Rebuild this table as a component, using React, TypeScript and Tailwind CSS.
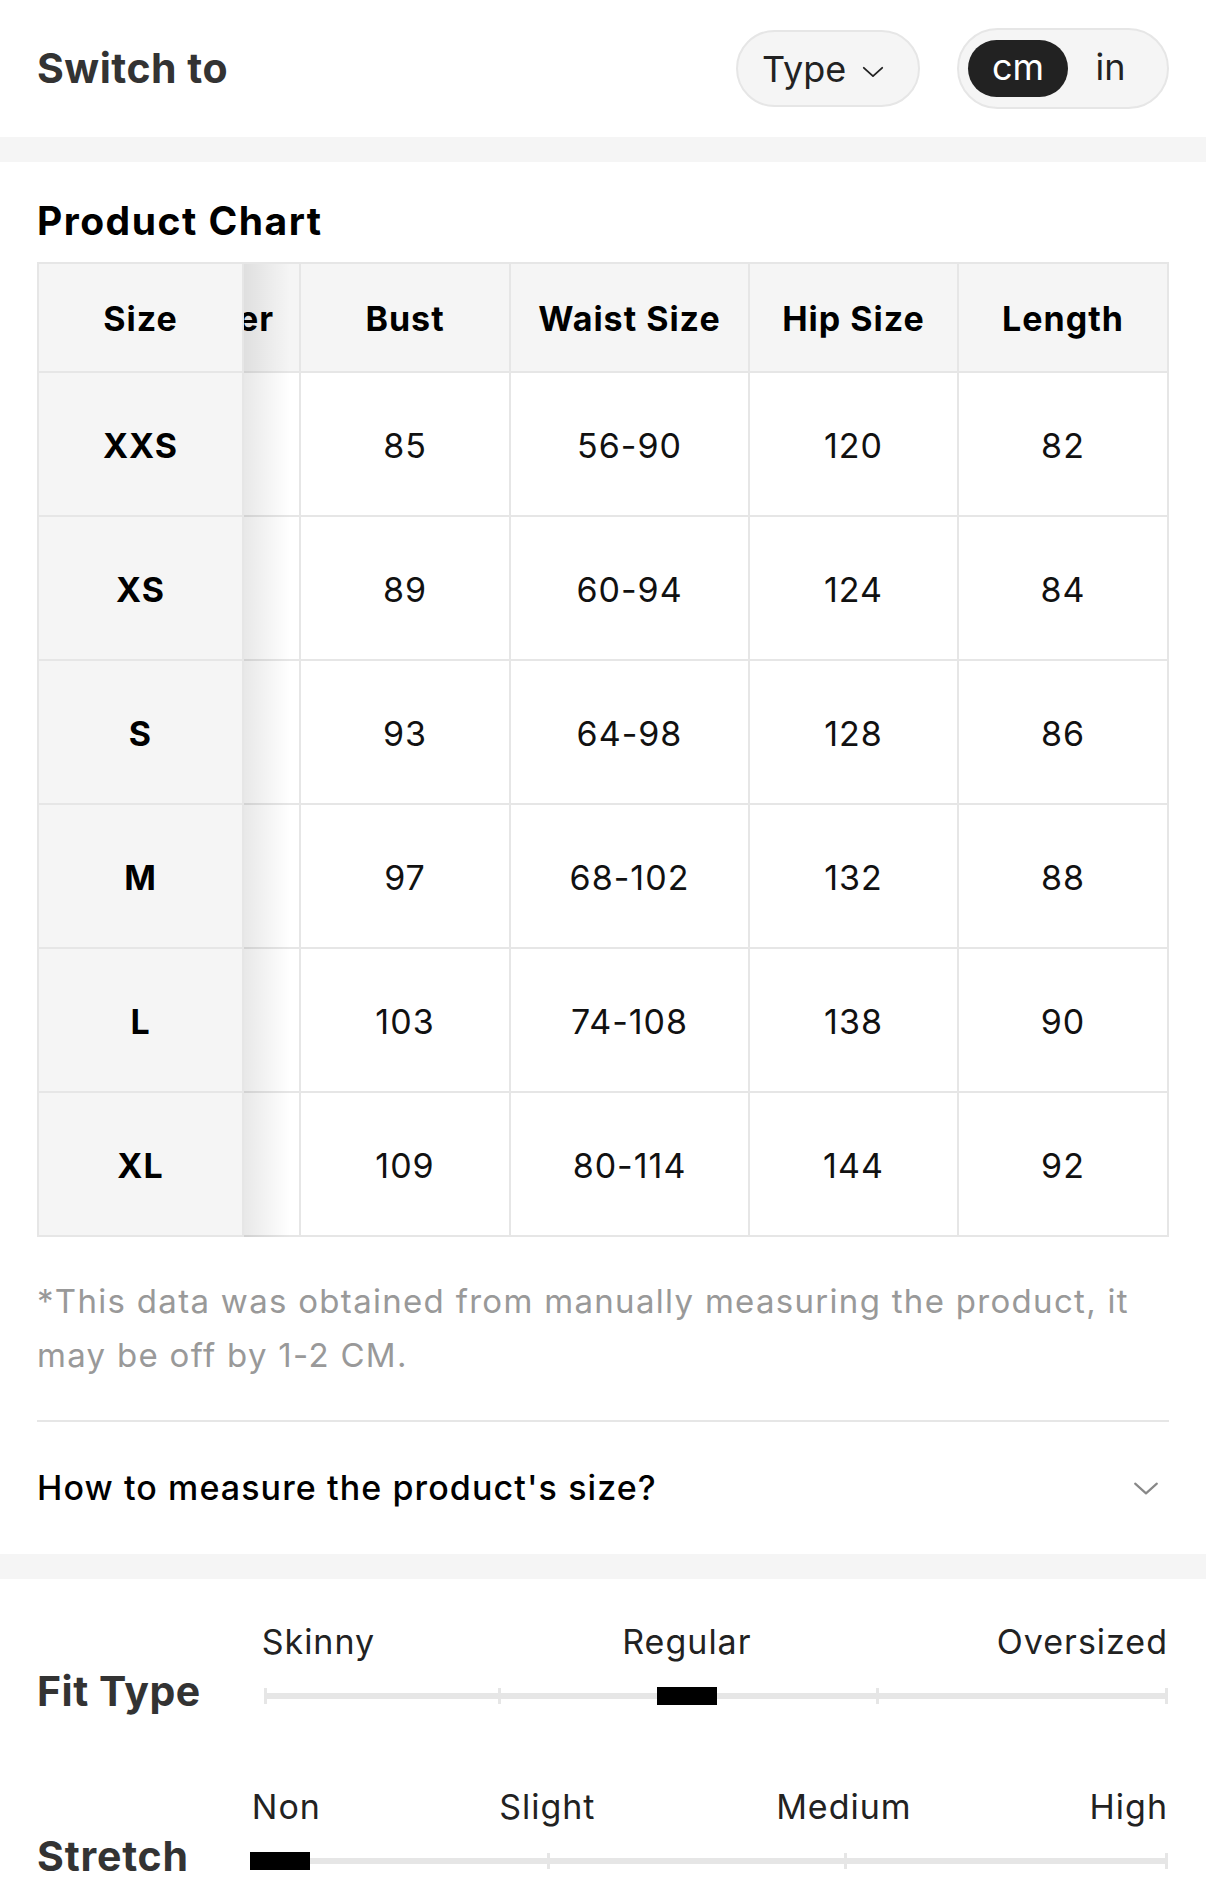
import { useLayoutEffect, useRef } from "react"

const rows = [
    { size: "XXS", shoulder: "36", bust: "85", waist: "56-90", hip: "120", length: "82" },
    { size: "XS", shoulder: "37", bust: "89", waist: "60-94", hip: "124", length: "84" },
    { size: "S", shoulder: "38", bust: "93", waist: "64-98", hip: "128", length: "86" },
    { size: "M", shoulder: "39", bust: "97", waist: "68-102", hip: "132", length: "88" },
    { size: "L", shoulder: "40.5", bust: "103", waist: "74-108", hip: "138", length: "90" },
    { size: "XL", shoulder: "42", bust: "109", waist: "80-114", hip: "144", length: "92" },
]

const cols = [
    { key: "shoulder", title: "Shoulder", w: "w-[210px]" },
    { key: "bust", title: "Bust", w: "w-[210px]" },
    { key: "waist", title: "Waist Size", w: "w-[239px]" },
    { key: "hip", title: "Hip Size", w: "w-[209px]" },
    { key: "length", title: "Length", w: "w-[210px]" },
]

const Chevron = ({ className }: { className: string }) => (
    <svg className={className} viewBox="0 0 24 12" fill="none" stroke="currentColor" strokeWidth="2" strokeLinecap="round" strokeLinejoin="round">
        <path d="M2 2l10 9 10-9" />
    </svg>
)

const App = () => {
    const scrollRef = useRef<HTMLDivElement>(null)

    // table is shown scrolled to the far right, Size column stays pinned
    useLayoutEffect(() => {
        const el = scrollRef.current
        if (el) el.scrollLeft = el.scrollWidth
    }, [])

    return (
        <div className="w-full bg-white text-black" style={{ fontFamily: "Inter, 'Noto Sans', sans-serif" }}>
            {/* switch bar */}
            <div className="h-[137px] px-[37px] flex items-center justify-between">
                <div className="text-[41px] font-bold text-[#333] leading-none tracking-[0.5px]">Switch to</div>
                <div className="flex items-center gap-[37px]">
                    <div className="h-[77px] w-[184px] rounded-full border-2 border-[#e6e6e6] bg-[#f5f5f5] flex items-center pl-[24px] gap-[16px]">
                        <span className="text-[36px] text-[#222] leading-none">Type</span>
                        <Chevron className="w-[22px] h-[11px] text-[#222] mt-[5px]" />
                    </div>
                    <div className="h-[81px] w-[212px] rounded-full border-2 border-[#e6e6e6] bg-[#f5f5f5] flex items-center pl-[9px]">
                        <div className="h-[57px] w-[100px] rounded-full bg-[#222] text-white text-[36px] flex items-center justify-center leading-none pb-[3px]">cm</div>
                        <div className="flex-1 text-center text-[36px] text-[#222] leading-none pr-[14px] pb-[3px]">in</div>
                    </div>
                </div>
            </div>

            <div className="h-[25px] bg-[#f5f5f5]" />

            {/* product chart */}
            <div className="px-[37px] pt-[39px]">
                <h3 className="text-[39px] font-bold leading-none tracking-[1.5px]">Product Chart</h3>

                <div className="relative mt-[22px] flex border-l-2 border-t-2 border-[#e6e6e6]">
                    <div className="w-[205px] shrink-0 bg-[#f5f5f5]">
                        <div className="h-[109px] pt-[2px] border-r-2 border-b-2 border-[#e6e6e6] flex items-center justify-center text-[34px] font-bold tracking-[1px]">Size</div>
                        {rows.map(r => (
                            <div key={r.size} className="h-[144px] pt-[3px] border-r-2 border-b-2 border-[#e6e6e6] flex items-center justify-center text-[34px] font-bold tracking-[1px]">
                                {r.size}
                            </div>
                        ))}
                    </div>
                    <div ref={scrollRef} className="flex-1 overflow-x-auto [scrollbar-width:none] [&::-webkit-scrollbar]:hidden">
                        <div className="flex w-max bg-[#f5f5f5]">
                            {cols.map(c => (
                                <div key={c.key} className={`${c.w} h-[109px] pt-[2px] shrink-0 border-r-2 border-b-2 border-[#e6e6e6] flex items-center justify-center text-[34px] font-bold tracking-[1px] whitespace-nowrap`}>
                                    {c.title}
                                </div>
                            ))}
                        </div>
                        {rows.map(r => (
                            <div key={r.size} className="flex w-max">
                                {cols.map(c => (
                                    <div key={c.key} className={`${c.w} h-[144px] pt-[3px] shrink-0 border-r-2 border-b-2 border-[#e6e6e6] flex items-center justify-center text-[34px] tracking-[1px] text-[#111]`}>
                                        {(r as any)[c.key]}
                                    </div>
                                ))}
                            </div>
                        ))}
                    </div>
                    <div className="pointer-events-none absolute left-[205px] top-0 bottom-0 w-[46px] bg-linear-to-r from-black/[0.09] to-transparent" />
                </div>

                <p className="mt-[37px] text-[33px] leading-[54px] tracking-[1.3px] text-[#999]">
                    *This data was obtained from manually measuring the product, it may be off by 1-2 CM.
                </p>

                <div className="mt-[38px] h-[2px] bg-[#e6e6e6]" />

                <div className="h-[132px] flex items-center justify-between">
                    <span className="text-[34px] font-medium leading-none tracking-[1.1px]">How to measure the product's size?</span>
                    <Chevron className="w-[26px] h-[14px] text-[#888] mr-[10px]" />
                </div>
            </div>

            <div className="h-[25px] bg-[#f5f5f5]" />

            {/* fit */}
            <div className="pl-[37px] pr-[38px] pt-[43px] pb-[33px]">
                <div className="flex items-end gap-[63px]">
                    <div className="text-[41px] font-bold text-[#333] leading-none tracking-[0.5px] mb-[-7px]">Fit Type</div>
                    <div className="flex-1">
                        <div className="relative h-[40px] text-[34px] leading-[40px] tracking-[1px] text-[#222]">
                            <span className="absolute left-[-2px] top-0">Skinny</span>
                            <span className="absolute left-[46.8%] top-0 -translate-x-1/2">Regular</span>
                            <span className="absolute right-0 top-0">Oversized</span>
                        </div>
                        <div className="relative h-[18px] mt-[25px]">
                            <div className="absolute left-0 right-0 top-[6px] h-[6px] bg-[#e6e6e6]" />
                            <div className="absolute left-0 top-[1px] h-[16px] w-[3px] bg-[#e6e6e6]" />
                            <div className="absolute left-[25.9%] top-[1px] h-[16px] w-[3px] bg-[#e6e6e6]" />
                            <div className="absolute left-[67.7%] top-[1px] h-[16px] w-[3px] bg-[#e6e6e6]" />
                            <div className="absolute right-0 top-[1px] h-[16px] w-[3px] bg-[#e6e6e6]" />
                            <div className="absolute left-[43.5%] top-0 h-[18px] w-[60px] bg-black" />
                        </div>
                    </div>
                </div>

                <div className="flex items-end gap-[61px] mt-[82px]">
                    <div className="text-[41px] font-bold text-[#333] leading-none tracking-[0.8px] mb-[-7px]">Stretch</div>
                    <div className="flex-1">
                        <div className="relative h-[40px] text-[34px] leading-[40px] tracking-[1px] text-[#222]">
                            <span className="absolute left-[2px] top-0">Non</span>
                            <span className="absolute left-[32.4%] top-0 -translate-x-1/2">Slight</span>
                            <span className="absolute left-[64.7%] top-0 -translate-x-1/2">Medium</span>
                            <span className="absolute right-0 top-0">High</span>
                        </div>
                        <div className="relative h-[18px] mt-[25px]">
                            <div className="absolute left-0 right-0 top-[6px] h-[6px] bg-[#e6e6e6]" />
                            <div className="absolute left-[32.4%] top-[1px] h-[16px] w-[3px] bg-[#e6e6e6]" />
                            <div className="absolute left-[64.7%] top-[1px] h-[16px] w-[3px] bg-[#e6e6e6]" />
                            <div className="absolute right-0 top-[1px] h-[16px] w-[3px] bg-[#e6e6e6]" />
                            <div className="absolute left-0 top-0 h-[18px] w-[60px] bg-black" />
                        </div>
                    </div>
                </div>
            </div>
        </div>
    )
}

export default App
